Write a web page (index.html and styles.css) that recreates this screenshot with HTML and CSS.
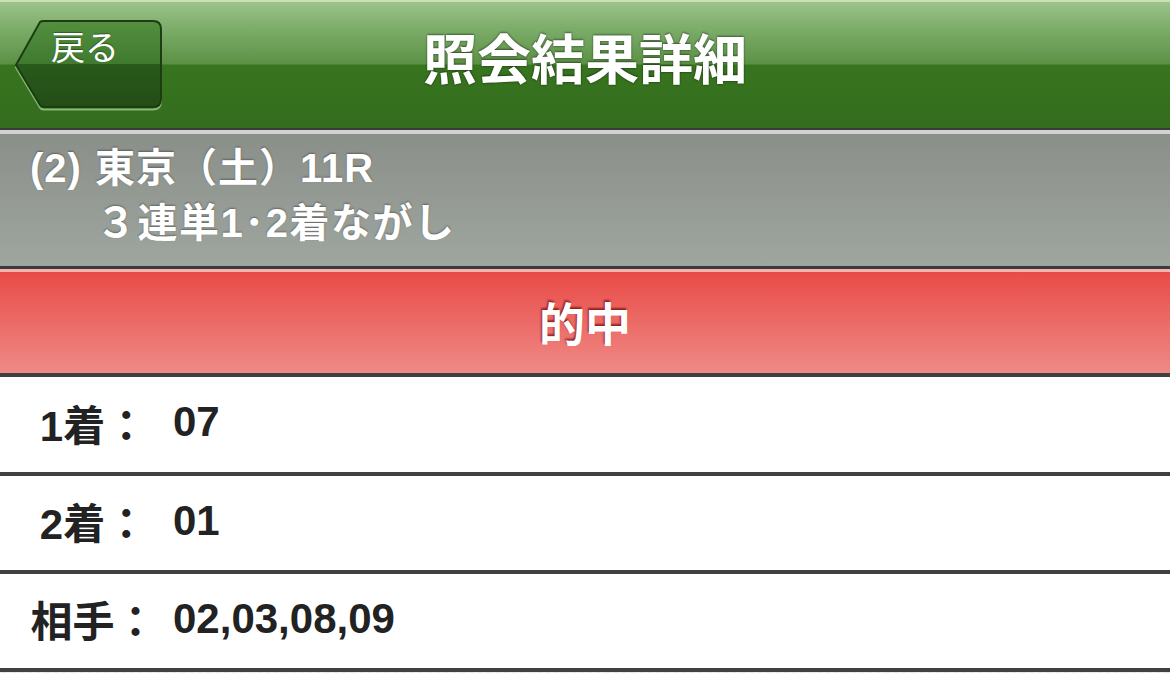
FILE: index.html
```html
<!DOCTYPE html>
<html lang="ja">
<head>
<meta charset="utf-8">
<title>照会結果詳細</title>
<link rel="stylesheet" href="styles.css">
</head>
<body>
<header class="navbar">
  <div class="nav-left">
    <a class="back-btn" href="#">
      <svg class="back-shape" width="152" height="92" viewBox="0 0 152 92" aria-hidden="true">
        <defs>
          <linearGradient id="bg" x1="0" y1="0" x2="0" y2="1">
            <stop offset="0" stop-color="#548f40"/>
            <stop offset="0.5" stop-color="#3f7a2f"/>
            <stop offset="0.5" stop-color="#29591b"/>
            <stop offset="1" stop-color="#234e16"/>
          </linearGradient>
        </defs>
        <path d="M3,47 L27,4 Q28,2 31,2 H140 Q148,2 148,10 V81 Q148,89 140,89 H31 Q28,89 27,87 Z" fill="none" stroke="#86b774" stroke-width="2" transform="translate(0,1.5)"/>
        <path d="M3,46 L27,3 Q28,2 31,2 H140 Q148,2 148,10 V80 Q148,88 140,88 H31 Q28,88 27,86 Z" fill="url(#bg)" stroke="#1b3d11" stroke-width="2"/>
      </svg>
      <span class="back-label">戻る</span>
    </a>
  </div>
  <h1 class="nav-title">照会結果詳細</h1>
  <div class="nav-right"></div>
</header>

<section class="race">
  <div class="race-line1">(2) 東京（土）11R</div>
  <div class="race-line2">３連単1･2着ながし</div>
</section>

<section class="hit">的中</section>

<ul class="results">
  <li class="row"><span class="label">1着：</span><span class="value">07</span></li>
  <li class="row"><span class="label">2着：</span><span class="value">01</span></li>
  <li class="row"><span class="label">相手：</span><span class="value">02,03,08,09</span></li>
</ul>
</body>
</html>
```

FILE: styles.css
```css
* { box-sizing: border-box; }

html, body {
  margin: 0;
  padding: 0;
}

body {
  font-family: "Liberation Sans", "Noto Sans CJK JP", sans-serif;
  background: repeating-linear-gradient(135deg, #ececec 0 4px, #e2e2e2 4px 6px);
  width: 1170px;
  height: 673px;
  overflow: hidden;
}

.navbar {
  height: 130px;
  border-top: 2px solid #c8e2b5;
  border-bottom: 2px solid #3a3a3a;
  background: linear-gradient(to bottom, #9cc38b 0, #7eae6b 25px, #5b9145 62px, #38751f 63px, #336c1e 100%);
  display: grid;
  grid-template-columns: 1fr auto 1fr;
  align-items: start;
}

.nav-left {
  padding-left: 13px;
  padding-top: 17px;
}

.back-btn {
  position: relative;
  display: block;
  width: 152px;
  height: 92px;
  text-decoration: none;
}

.back-shape {
  position: absolute;
  left: 0;
  top: 0;
  display: block;
}

.back-label {
  position: relative;
  display: block;
  padding-left: 38px;
  padding-top: 7px;
  font-family: "Noto Sans CJK JP", sans-serif;
  font-weight: 400;
  font-size: 34px;
  line-height: 40px;
  color: #ffffff;
  text-shadow: 0 -1px 1px rgba(0, 0, 0, 0.35);
}

.nav-title {
  margin: 0;
  padding-top: 24px;
  font-family: "Noto Sans CJK JP", sans-serif;
  font-weight: 700;
  font-size: 54px;
  line-height: 62px;
  color: #ffffff;
  text-shadow: 0 -1px 2px rgba(0, 0, 0, 0.45), 0 1px 2px rgba(0, 0, 0, 0.25);
}

.race {
  height: 139px;
  border-top: 4px solid #d0d3cf;
  border-bottom: 3px solid #3c3c3c;
  background: linear-gradient(to bottom, #8a8f8a, #9fa59f);
  padding: 7px 0 0 30px;
  color: #ffffff;
  font-weight: 700;
  font-size: 40px;
  line-height: 55px;
  text-shadow: 0 -1px 2px rgba(0, 0, 0, 0.35);
}

.race-line1 {
  letter-spacing: 1px;
  word-spacing: 1px;
}

.race-line2 {
  padding-left: 66px;
  letter-spacing: 1.5px;
}

.hit {
  height: 108px;
  border-top: 3px solid #f4b4ae;
  border-bottom: 4px solid #404040;
  background: linear-gradient(to bottom, #e94b47, #ef8a86);
  display: flex;
  align-items: center;
  justify-content: center;
  font-family: "Noto Sans CJK JP", sans-serif;
  font-weight: 700;
  font-size: 46px;
  color: #ffffff;
  text-shadow: -1px -2px 2px rgba(120, 10, 10, 0.75);
  padding-bottom: 4px;
}

.results {
  list-style: none;
  margin: 0;
  padding: 0;
}

.row {
  height: 98px;
  border-bottom: 4px solid #404040;
  background: #ffffff;
  display: grid;
  grid-template-columns: 173px 1fr;
  align-items: center;
  padding-bottom: 5px;
  color: #222222;
  font-weight: 700;
  font-size: 42px;
}

.row:first-child {
  height: 99px;
}

.label {
  text-align: center;
  padding-left: 14px;
}
```
